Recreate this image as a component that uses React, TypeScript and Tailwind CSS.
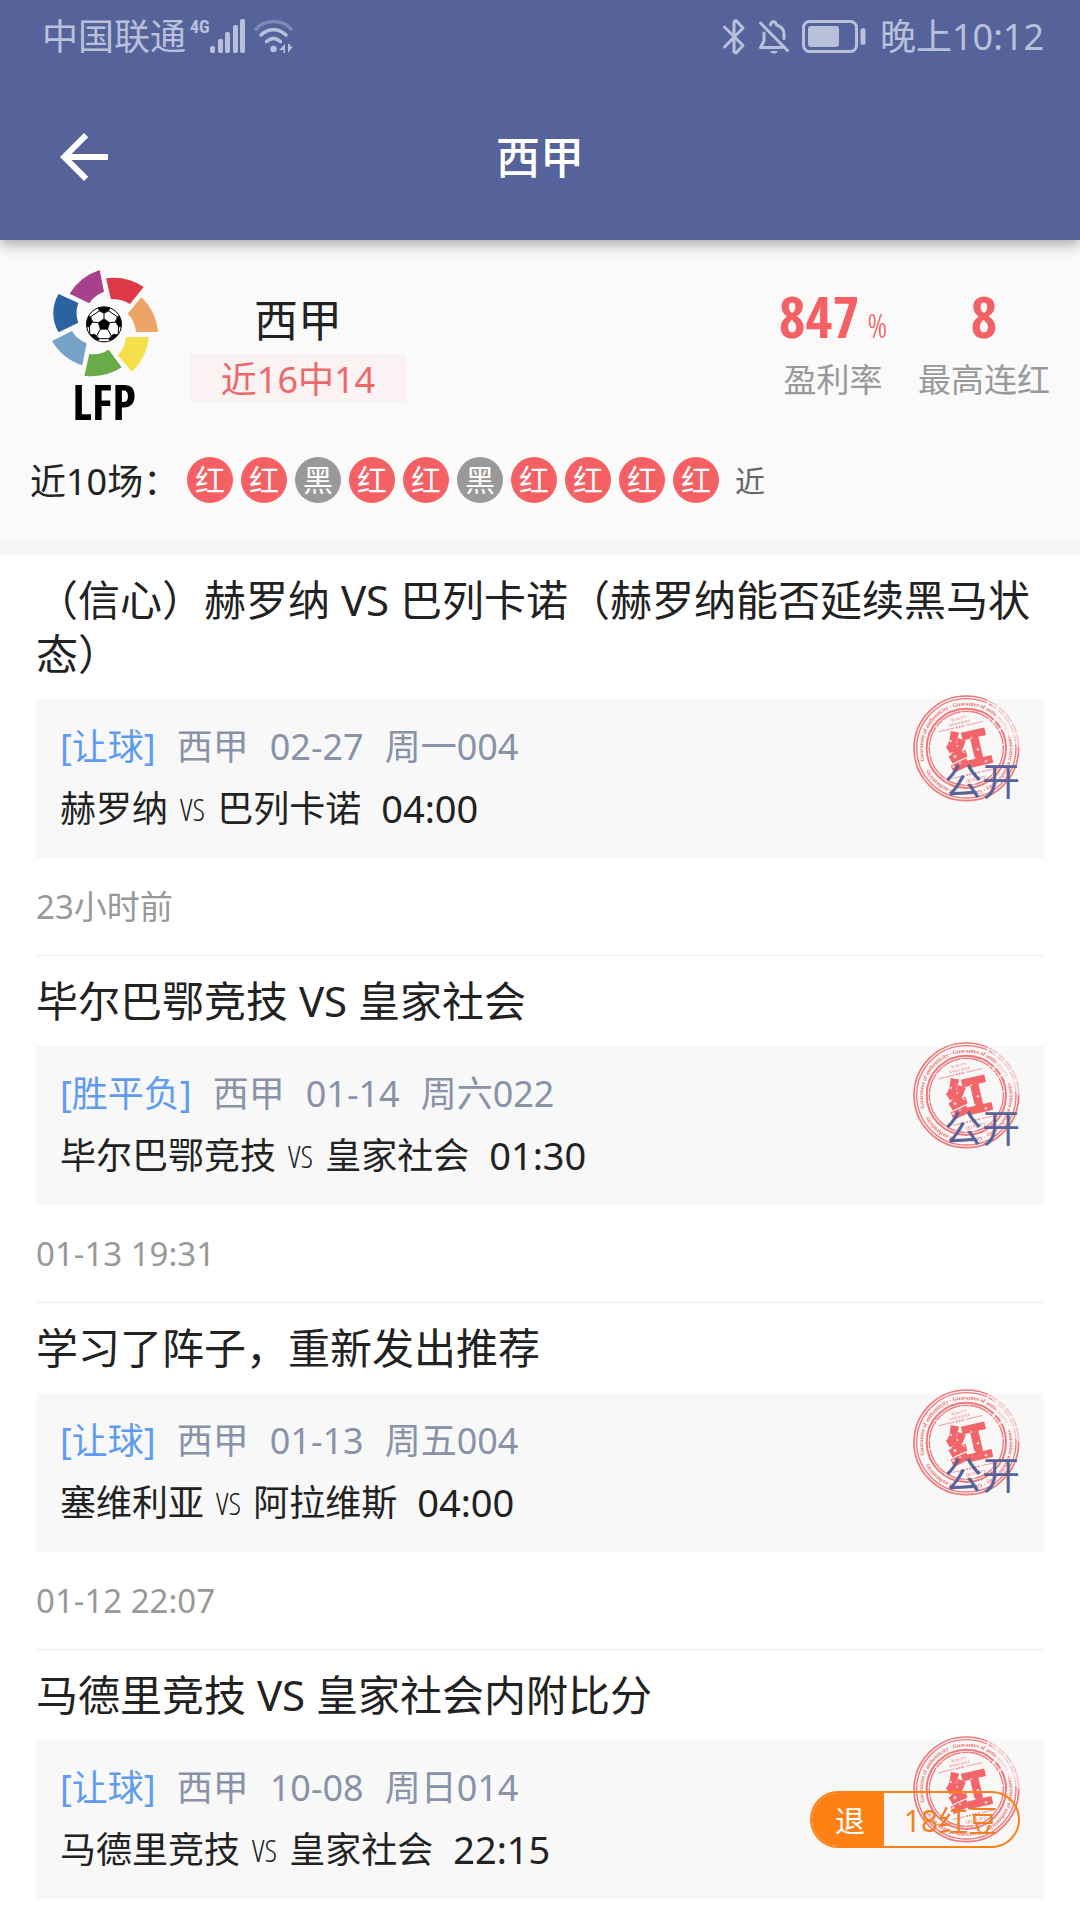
import { useId } from "react";

type Result = "红" | "黑";

type Tip = {
  title: string;
  play: string;
  league: string;
  date: string;
  code: string;
  home: string;
  away: string;
  kickoff: string;
  posted?: string;
  refund?: string;
};

const results: Result[] = ["红", "红", "黑", "红", "红", "黑", "红", "红", "红", "红"];

const tips: Tip[] = [
  {
    title: "（信心）赫罗纳 VS 巴列卡诺（赫罗纳能否延续黑马状态）",
    play: "[让球]",
    league: "西甲",
    date: "02-27",
    code: "周一004",
    home: "赫罗纳",
    away: "巴列卡诺",
    kickoff: "04:00",
    posted: "23小时前",
  },
  {
    title: "毕尔巴鄂竞技 VS 皇家社会",
    play: "[胜平负]",
    league: "西甲",
    date: "01-14",
    code: "周六022",
    home: "毕尔巴鄂竞技",
    away: "皇家社会",
    kickoff: "01:30",
    posted: "01-13 19:31",
  },
  {
    title: "学习了阵子，重新发出推荐",
    play: "[让球]",
    league: "西甲",
    date: "01-13",
    code: "周五004",
    home: "塞维利亚",
    away: "阿拉维斯",
    kickoff: "04:00",
    posted: "01-12 22:07",
  },
  {
    title: "马德里竞技 VS 皇家社会内附比分",
    play: "[让球]",
    league: "西甲",
    date: "10-08",
    code: "周日014",
    home: "马德里竞技",
    away: "皇家社会",
    kickoff: "22:15",
    refund: "18红豆",
  },
];

function SignalIcon() {
  return (
    <svg width="36" height="36" viewBox="0 0 36 36" fill="currentColor" aria-hidden="true">
      <rect x="0" y="27" width="5" height="7" rx="2" />
      <rect x="8" y="20" width="5" height="14" rx="2" />
      <rect x="15" y="13" width="5" height="21" rx="2" />
      <rect x="23" y="6" width="5" height="28" rx="2" />
      <rect x="30" y="0" width="5" height="34" rx="2" />
    </svg>
  );
}

function WifiIcon() {
  return (
    <svg width="40" height="36" viewBox="0 0 40 36" fill="none" stroke="currentColor" strokeWidth="3.500" strokeLinecap="round" aria-hidden="true">
      <path d="M2 10 C11 0 28 0 37 10" opacity="0.4" />
      <path d="M7 16 C14 9 25 9 32 16" />
      <path d="M12.500 22.500 C17 18.500 22 18.500 26.500 22.500" />
      <circle cx="19.500" cy="30" r="3.200" fill="currentColor" stroke="none" />
      <path d="M31 25 v9 h-1.500 v-3 h-4.500 z M34 25 v9 l5-6.500 h-3 v-2.500 z" fill="currentColor" stroke="none" />
    </svg>
  );
}

function BluetoothIcon() {
  return (
    <svg width="24" height="38" viewBox="0 0 24 38" fill="none" stroke="currentColor" strokeWidth="3" strokeLinecap="round" strokeLinejoin="round" aria-hidden="true">
      <path d="M2.500 9 L21 27.500 L14 35 L12 34 V4 L14 2.500 L21 10 L2.500 29" />
    </svg>
  );
}

function BellOffIcon() {
  return (
    <svg width="32" height="36" viewBox="0 0 32 36" fill="none" stroke="currentColor" strokeWidth="3" strokeLinecap="round" strokeLinejoin="round" aria-hidden="true">
      <path d="M2.500 4 L29.500 31.500" />
      <path d="M6 14 V22 L2.500 28.500 H24" />
      <path d="M12.500 6 C13 1.500 18 1.500 18.500 6 C23.500 7.500 26 11 26 15.500 V19.500" />
      <path d="M12.500 32 a3.500 2.500 0 0 0 7 0 z" fill="currentColor" stroke="none" />
    </svg>
  );
}

function BatteryIcon() {
  return (
    <svg width="64" height="36" viewBox="0 0 64 36" aria-hidden="true">
      <rect x="1.500" y="2.500" width="53" height="30" rx="6" fill="none" stroke="currentColor" strokeWidth="3" />
      <rect x="6" y="7" width="31" height="21" rx="3" fill="currentColor" />
      <rect x="58.500" y="9" width="5" height="17" rx="2.500" fill="currentColor" />
    </svg>
  );
}

function LeagueLogo() {
  const clip = useId();
  return (
    <svg width="130" height="170" viewBox="0 0 390 510" role="img" aria-label="LFP" className="overflow-visible">
      <path d="M89 101 A165 165 0 0 1 179 30 L192 95 A85 85 0 0 0 148 130 Z" fill="#a8418c" />
      <path d="M198 55 A165 165 0 0 1 311 81 L270 132 A85 85 0 0 0 213 118 Z" fill="#dd3748" />
      <path d="M304 112 A165 165 0 0 1 354 216 L288 216 A85 85 0 0 0 263 161 Z" fill="#eca566" />
      <path d="M326 231 A165 165 0 0 1 276 335 L233 286 A85 85 0 0 0 258 231 Z" fill="#f5e04b" />
      <path d="M245 322 A165 165 0 0 1 133 347 L148 282 A85 85 0 0 0 206 269 Z" fill="#69ab48" />
      <path d="M127 316 A165 165 0 0 1 36 243 L96 213 A85 85 0 0 0 140 250 Z" fill="#77a2c8" />
      <path d="M56 217 A110 110 0 0 1 56 102 L115 129 A85 85 0 0 0 115 188 Z" fill="#2a639f" />
      <clipPath id={clip}>
        <circle cx="192" cy="193" r="52" />
      </clipPath>
      <circle cx="192" cy="193" r="52" fill="#fff" />
      <g clipPath={`url(#${clip})`} stroke="#000" strokeWidth="2">
        <path d="M192 176 L209 188 L203 208 H181 L175 188 Z" />
        <path d="M174 143 L178 153 L192 160 L206 153 L210 143 L192 136 Z" />
        <path d="M246 166 L232 170 L226 186 L236 200 L250 202 Z" />
        <path d="M138 166 L152 170 L158 186 L148 200 L134 202 Z" />
        <path d="M210 247 L208 234 L220 223 L236 224 L240 240 Z" />
        <path d="M174 247 L176 234 L164 223 L148 224 L144 240 Z" />
        <path d="M192 176 V160 M209 188 L226 186 M203 208 L214 228 M181 208 L170 228 M175 188 L158 186 M206 153 L232 170 M178 153 L152 170 M236 200 L234 224 M148 200 L150 224 M176 236 L208 236" fill="none" strokeWidth="3" />
      </g>
      <circle cx="192" cy="193" r="52.500" fill="none" stroke="#000" strokeWidth="3" />
      <text x="192" y="480" textAnchor="middle" fontSize="148" fontWeight="700" className="font-['Open_Sans_Condensed','Roboto_Condensed','Roboto',sans-serif]">
        LFP
      </text>
    </svg>
  );
}

function Stamp() {
  const ring = useId();
  const worn = useId();
  return (
    <svg width="107" height="107" viewBox="37 47 321 321" role="img" aria-label="红" className="absolute -top-1 right-6">
      <defs>
        <path id={ring} d="M72 245 A130 130 0 1 1 322 172 A130 130 0 0 1 72 245" />
        <mask id={worn} maskUnits="userSpaceOnUse" x="30" y="40" width="340" height="340">
          <rect x="30" y="40" width="340" height="340" fill="#fff" />
          <path d="M262 50 L380 70 V205 L352 205 L300 140 Z" fill="#000" opacity="0.6" />
          <g stroke="#000" strokeWidth="7" opacity="0.8">
            <path d="M268 52 L258 84 M300 70 L284 98 M325 92 L302 114 M345 125 L318 138 M355 160 L322 165 M290 110 L276 132 M312 140 L292 154" />
          </g>
          <g fill="#000" opacity="0.75">
            <circle cx="150" cy="185" r="4" />
            <circle cx="170" cy="200" r="3" />
            <circle cx="163" cy="232" r="5" />
            <circle cx="178" cy="252" r="3" />
            <circle cx="232" cy="210" r="4" />
            <circle cx="222" cy="235" r="3" />
            <circle cx="240" cy="172" r="3" />
            <circle cx="158" cy="262" r="4" />
            <circle cx="212" cy="176" r="3" />
            <circle cx="190" cy="218" r="3" />
            <circle cx="256" cy="246" r="4" />
          </g>
        </mask>
      </defs>
      <g mask={`url(#${worn})`} fill="#f2666a">
        <g fill="none" stroke="#f0787b">
          <circle cx="197" cy="207" r="157" strokeWidth="5" />
          <circle cx="197" cy="207" r="149" strokeWidth="4" />
          <circle cx="197" cy="207" r="119" strokeWidth="6" />
          <circle cx="197" cy="207" r="111" strokeWidth="4" strokeDasharray="60 3 24 2" />
        </g>
        <text fontSize="17" fontWeight="700" className="font-['Liberation_Serif',serif]">
          <textPath href={`#${ring}`}>
            Guarantee of authenticity · Guarantee of authenticity · Guarantee of authenticity · Guarantee of authenticity
          </textPath>
        </text>
        <g transform="rotate(-13 205 212)">
          <g fontSize="11" textAnchor="middle" className="font-['Liberation_Serif',serif]">
            <text x="196" y="116">QUALITY</text>
            <text x="196" y="130">ASSURANCE</text>
            <text x="206" y="306" fontSize="14">QUALITY</text>
          </g>
          <path d="M128 138 H178 M214 138 H264 M138 284 H176 M226 284 H270" stroke="#f0787b" strokeWidth="2" />
          <path d="M182 138 H210 M180 284 H222" stroke="#f0787b" strokeWidth="5" strokeDasharray="5 4" />
          <text x="205" y="258" fontSize="128" fontWeight="900" stroke="#f2666a" strokeWidth="5" textAnchor="middle" className="font-['Noto_Sans_CJK_SC',sans-serif]">
            红
          </text>
        </g>
      </g>
    </svg>
  );
}

function StatusBar() {
  return (
    <div className="flex h-[74px] items-center justify-between pr-[36px] pl-[42px] text-[36px] leading-[48px] text-[#b9c0da]">
      <div className="flex items-center">
        <span>中国联通</span>
        <span className="mb-5 ml-1 font-['Roboto_Condensed','Roboto',sans-serif] text-[18px] leading-5 font-bold">4G</span>
        <SignalIcon />
        <span className="ml-2">
          <WifiIcon />
        </span>
      </div>
      <div className="flex items-center gap-3">
        <BluetoothIcon />
        <BellOffIcon />
        <BatteryIcon />
        <span className="pl-[2px]">晚上10:12</span>
      </div>
    </div>
  );
}

function Summary() {
  return (
    <section className="border-b-[15px] border-[#f5f5f5] bg-[#fafafa] pt-5">
      <div className="flex h-[170px] pr-[30px] pl-10">
        <LeagueLogo />
        <div className="ml-5 flex w-[216px] flex-col items-center pt-7">
          <h2 className="mb-[2px] text-[44px] leading-[64px] text-[#222]">西甲</h2>
          <p className="h-12 w-full bg-[#fbf3f3] text-center text-[36px] leading-[52px] text-[#ec686b]">近16中14</p>
        </div>
        <dl className="ml-auto flex gap-8 pt-[22px] text-center">
          <div className="flex w-[106px] flex-col-reverse items-center justify-end">
            <dt className="text-[33px] leading-[48px] text-[#999]">盈利率</dt>
            <dd className="flex h-[74px] items-baseline justify-center gap-2 font-['Open_Sans_Condensed','Roboto_Condensed','Roboto',sans-serif] text-[#f56064]">
              <span className="text-[58px] leading-[68px] font-bold">847</span>
              <span className="font-['Open_Sans_Condensed_Light','Roboto_Condensed','Roboto',sans-serif] text-[34px] leading-[40px] font-light">%</span>
            </dd>
          </div>
          <div className="flex flex-col-reverse justify-end">
            <dt className="text-[33px] leading-[48px] text-[#999]">最高连红</dt>
            <dd className="h-[74px] font-['Open_Sans_Condensed','Roboto_Condensed','Roboto',sans-serif] text-[58px] leading-[68px] font-bold text-[#f56064]">8</dd>
          </div>
        </dl>
      </div>
      <div className="flex h-[110px] items-center pb-[10px] pl-[30px]">
        <span className="w-[157px] pt-1 text-[36px] text-[#222]">近10场：</span>
        <ul className="flex gap-2">
          {results.map((result, i) => (
            <li
              key={i}
              className={
                result === "红"
                  ? "size-[46px] rounded-full bg-[#f56064] text-center text-[30px] leading-[46px] text-white"
                  : "size-[46px] rounded-full bg-[#999] text-center text-[30px] leading-[46px] text-white"
              }
            >
              {result}
            </li>
          ))}
        </ul>
        <span className="ml-4 text-[30px] text-[#666]">近</span>
      </div>
    </section>
  );
}

function TipItem({ tip }: { tip: Tip }) {
  return (
    <article className="border-b border-[#ebebeb] pt-[18px] last:border-b-0">
      <h3 className="mb-[18px] text-[42px] leading-[54px] text-[#222]">{tip.title}</h3>
      <div className="relative flex items-center justify-between bg-[#f8f8f8] pt-[17px] pr-6 pb-[18px] pl-6">
        <Stamp />
        <div className="text-[36px] leading-[62px]">
          <p className="flex gap-[21px] text-[#8a92a8]">
            <span className="text-[#5f9cf0]">{tip.play}</span>
            <span>{tip.league}</span>
            <span>{tip.date}</span>
            <span>{tip.code}</span>
          </p>
          <p className="flex text-[#222]">
            <span>{tip.home}</span>
            <span className="mx-3 font-['Open_Sans_Condensed_Light','Roboto_Condensed','Roboto',sans-serif] text-[32px]">VS</span>
            <span>{tip.away}</span>
            <time className="ml-5 text-[38px] leading-[60px]">{tip.kickoff}</time>
          </p>
        </div>
        {tip.refund ? (
          <button className="relative flex h-[57px] w-[210px] overflow-hidden rounded-full border-2 border-[#ff8015] leading-[55px]">
            <span className="w-[72px] bg-[#ff8015] pl-1 text-[30px] text-white">退</span>
            <span className="flex-1 text-center text-[30px] text-[#f08024]">{tip.refund}</span>
          </button>
        ) : (
          <span className="relative pt-1 text-[38px] leading-[54px] text-[#55639a]">公开</span>
        )}
      </div>
      {tip.posted && <p className="pt-[25px] pb-6 text-[33px] leading-[48px] text-[#999]">{tip.posted}</p>}
    </article>
  );
}

export default function App() {
  return (
    <div className="min-h-screen overflow-hidden bg-white font-['Noto_Sans','Noto_Sans_CJK_SC',sans-serif]">
      <header className="relative z-10 bg-[#55639a] shadow-[0_4px_14px_rgba(0,0,0,0.35)]">
        <StatusBar />
        <div className="grid h-[166px] grid-cols-[72px_1fr_72px] items-center px-12">
          <button aria-label="返回" className="size-[72px] text-white">
            <svg width="72" height="72" viewBox="0 0 24 24" fill="currentColor" aria-hidden="true">
              <path d="M20 11H7.830l5.590-5.590L12 4l-8 8 8 8 1.410-1.410L7.830 13H20v-2z" />
            </svg>
          </button>
          <h1 className="text-center text-[44px] font-medium text-white">西甲</h1>
        </div>
      </header>
      <Summary />
      <main className="px-9">
        {tips.map((tip) => (
          <TipItem key={tip.title} tip={tip} />
        ))}
      </main>
    </div>
  );
}
